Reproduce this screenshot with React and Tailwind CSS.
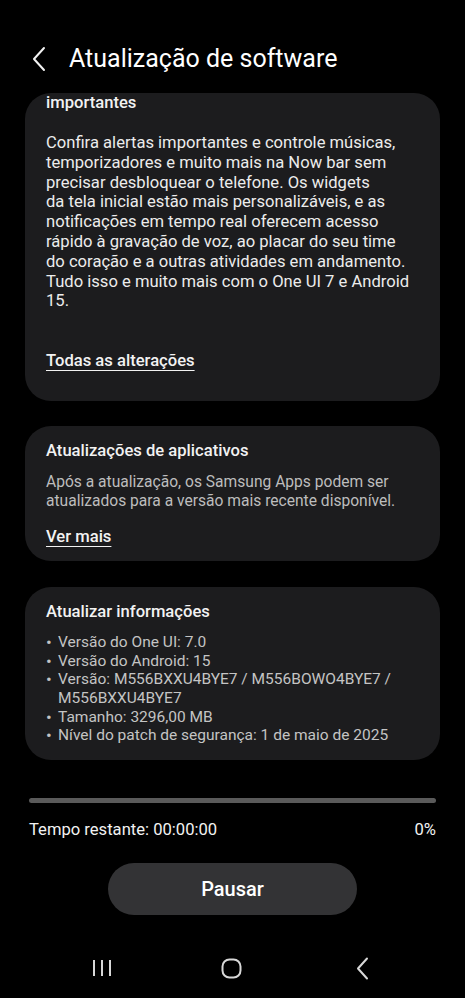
import React from 'react';

const card = 'rounded-[26px] bg-[#1c1c1e] px-[21px]';

const introLines = [
  'Confira alertas importantes e controle músicas,',
  'temporizadores e muito mais na Now bar sem',
  'precisar desbloquear o telefone. Os widgets',
  'da tela inicial estão mais personalizáveis, e as',
  'notificações em tempo real oferecem acesso',
  'rápido à gravação de voz, ao placar do seu time',
  'do coração e a outras atividades em andamento.',
  'Tudo isso e muito mais com o One UI 7 e Android',
  '15.',
];

const infoItems = [
  'Versão do One UI: 7.0',
  'Versão do Android: 15',
  'Versão: M556BXXU4BYE7 / M556BOWO4BYE7 / M556BXXU4BYE7',
  'Tamanho: 3296,00 MB',
  'Nível do patch de segurança: 1 de maio de 2025',
];

const App = () => {
  return (
    <div
      className="w-[465px] h-[998px] bg-black text-[#f2f2f2] flex flex-col overflow-hidden"
      style={{ fontFamily: 'Roboto, "Noto Sans", sans-serif' }}
    >
      {/* Header */}
      <div className="h-[93px] shrink-0 pt-[44px]">
        <div className="h-[30px] flex items-center">
          <svg className="ml-[31px]" width="16" height="26" viewBox="0 0 16 26" fill="none">
            <path d="M13 2 L3 13 L13 24" stroke="#f2f2f2" strokeWidth="2" strokeLinecap="round" strokeLinejoin="round" />
          </svg>
          <h1 className="ml-[22px] text-[25px] leading-[30px] text-white">Atualização de software</h1>
        </div>
      </div>

      {/* Scroll area */}
      <div className="h-[687px] shrink-0 overflow-hidden px-[25px]">
        <div className={`${card} mt-[4px] pb-[30px]`}>
          <p className="-mt-[4px] text-[16.6px] leading-[20px] font-medium relative">importantes</p>
          <p className="mt-[20px] text-[16.6px] leading-[19.8px] text-[#ececec] whitespace-nowrap">
            {introLines.map((line) => (
              <span key={line} className="block">{line}</span>
            ))}
          </p>
          <p className="mt-[40px] text-[16.6px] leading-[20px] font-medium underline underline-offset-[4px] decoration-1">
            Todas as alterações
          </p>
        </div>

        <div className={`${card} mt-[25px] pt-[14px] pb-[14px]`}>
          <h2 className="text-[16.6px] leading-[22px] font-medium">Atualizações de aplicativos</h2>
          <p className="mt-[11px] text-[15.6px] leading-[19px] text-[#bdbdbd]">
            Após a atualização, os Samsung Apps podem ser atualizados para a versão mais recente disponível.
          </p>
          <p className="mt-[16px] text-[16.6px] leading-[20px] font-medium underline underline-offset-[4px] decoration-1">
            Ver mais
          </p>
        </div>

        <div className={`${card} mt-[26px] pt-[14px] pb-[15px]`}>
          <h2 className="text-[16.6px] leading-[22px] font-medium">Atualizar informações</h2>
          <ul className="mt-[10px] text-[15.5px] leading-[18.6px] text-[#c4c4c4]">
            {infoItems.map((item) => (
              <li key={item} className="relative pl-[12px]">
                <span className="absolute left-0 top-0 text-[17px]">•</span>
                {item}
              </li>
            ))}
          </ul>
        </div>
      </div>

      {/* Progress */}
      <div className="px-[29px] pt-[18px]">
        <div className="h-[5px] rounded-full bg-[#5a5a5a]" />
        <div className="mt-[17px] flex justify-between text-[16.6px] leading-[20px] text-[#f2f2f2]">
          <span>Tempo restante: 00:00:00</span>
          <span>0%</span>
        </div>
      </div>

      <div className="mt-[23px] flex justify-center">
        <button className="w-[249px] h-[52px] rounded-full bg-[#333335] text-[20px] font-medium text-white">
          Pausar
        </button>
      </div>

      {/* Nav bar */}
      <div className="mt-[42px] h-[22px] flex items-center">
        <svg className="ml-[92px]" width="20" height="18" viewBox="0 0 20 18" fill="none">
          <path d="M2 1 V17 M10 1 V17 M18 1 V17" stroke="#d8d8d8" strokeWidth="2" />
        </svg>
        <svg className="ml-[109px]" width="21" height="21" viewBox="0 0 21 21" fill="none">
          <rect x="1.5" y="1.5" width="18" height="18" rx="7" stroke="#d8d8d8" strokeWidth="2" />
        </svg>
        <svg className="ml-[114px]" width="13" height="23" viewBox="0 0 13 23" fill="none">
          <path d="M11 1.5 L2 11.5 L11 21.5" stroke="#d8d8d8" strokeWidth="2" strokeLinecap="round" strokeLinejoin="round" />
        </svg>
      </div>
    </div>
  );
};

export default App;
